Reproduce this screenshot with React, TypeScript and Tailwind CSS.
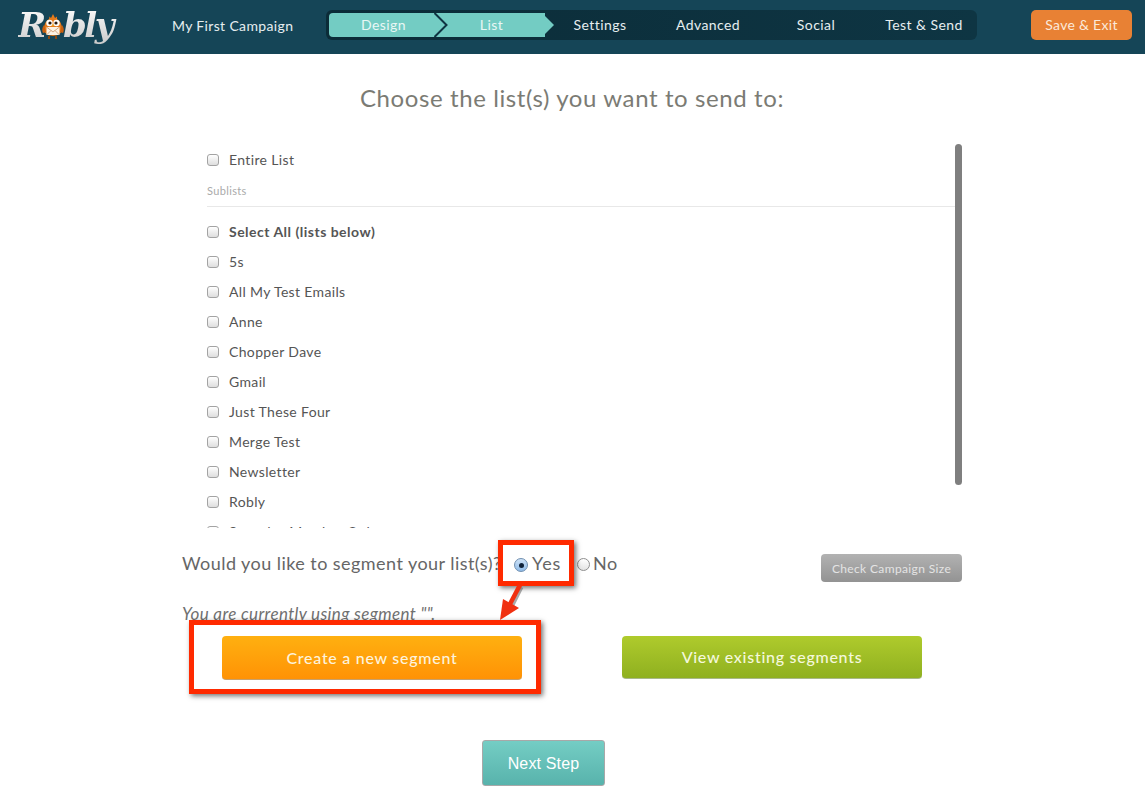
import React from 'react';

const LISTS = ['5s', 'All My Test Emails', 'Anne', 'Chopper Dave', 'Gmail', 'Just These Four', 'Merge Test', 'Newsletter', 'Robly', 'Saturday Member Only'];
const STEPS = ['Settings', 'Advanced', 'Social', 'Test & Send'];

const Check: React.FC = () => (
  <input
    type="checkbox"
    readOnly
    className="appearance-none w-3 h-3 shrink-0 translate-y-px rounded-[3px] border border-[#a3a3a3] bg-linear-to-b from-white to-[#dedede]"
  />
);

const Owl: React.FC = () => (
  <svg width="24" height="28" viewBox="0 0 24 28" className="shrink-0 -ml-[3px] -mr-[2px] mt-[3px]">
    <path d="M12 1 L14 5 L16 3.500 L16 6 Q21 9 21 16 Q21 22 12 23 Q3 22 3 16 Q3 9 8 6 L8.500 3.500 L10 5 Z" fill="#e57a1a" />
    <path d="M3 12 Q0 16 2 20 L5 19 Z M21 12 Q24 16 22 20 L19 19 Z" fill="#c9600f" />
    <circle cx="8.500" cy="10" r="3.200" fill="#fff" />
    <circle cx="15.500" cy="10" r="3.200" fill="#fff" />
    <circle cx="9" cy="10" r="1.600" fill="#2b1a0c" />
    <circle cx="15" cy="10" r="1.600" fill="#2b1a0c" />
    <path d="M11 11.500 L13 11.500 L12 13.500 Z" fill="#f4c430" />
    <rect x="5.500" y="14" width="13" height="8" rx="0.500" fill="#fbf3e6" />
    <path d="M5.500 14 L12 19 L18.500 14 M5.500 22 L10 17.500 M18.500 22 L14 17.500" fill="none" stroke="#c58a5a" strokeWidth="0.700" />
    <path d="M8 23 L8 26 M15 23 L15 26" stroke="#8a4a12" strokeWidth="2" />
  </svg>
);

const Logo: React.FC = () => (
  <div className="flex items-center w-[172px] pl-[18px] font-['DejaVu_Serif',serif] font-bold italic text-[34px] leading-[40px] tracking-[-0.07em]">
    <span className="bg-linear-to-b from-white to-[#c9c9c9] bg-clip-text text-transparent">R</span>
    <Owl />
    <span className="pr-2 bg-linear-to-b from-white to-[#c9c9c9] bg-clip-text text-transparent">bly</span>
  </div>
);

const Header: React.FC = () => (
  <header className="h-[54px] pb-1 bg-[#154557] flex items-center text-[14px] text-[#e6eef0]">
    <Logo />
    <div className="w-[154px] tracking-[0.025em]">My First Campaign</div>
    <nav className="w-[651px] h-[30px] rounded-md bg-linear-to-r from-[#0b2c38] to-[#0e3543] flex items-center pl-[3px]">
      <div className="relative w-[216px] h-6 bg-[#73ccc3] rounded-l-[4px] flex text-[#e8f7f5]">
        <span className="w-[109px] text-center leading-6 tracking-[0.03em]">Design</span>
        <span className="w-[107px] text-center leading-6 tracking-[0.03em]">List</span>
        <svg width="14" height="24" viewBox="0 0 14 24" className="absolute left-[105px] top-0">
          <path d="M0.500 0 L12.500 12 L0.500 24" fill="none" stroke="#0f3442" strokeWidth="2" />
        </svg>
        <svg width="12" height="24" viewBox="0 0 12 24" className="absolute left-[213px] top-0">
          <path d="M0 0 L12 12 L0 24 Z" fill="#73ccc3" />
        </svg>
      </div>
      <div className="flex pl-px">
        {STEPS.map((s) => (
          <span key={s} className="w-[108px] text-center leading-6 tracking-[0.03em]">{s}</span>
        ))}
      </div>
    </nav>
    <button className="ml-[54px] w-[101px] h-[30px] pb-px rounded-[5px] bg-[#e88134] text-[#fbe9da] tracking-[0.02em]">Save &amp; Exit</button>
  </header>
);

const ListBox: React.FC = () => (
  <div className="relative h-[384px] mt-[29px] overflow-hidden pl-[25px] text-[14px] text-[#555] tracking-[0.025em]">
    <label className="flex items-center gap-[10px] h-[30px]"><Check />Entire List</label>
    <div className="mt-[10px] pb-[9px] border-b border-[#e8e8e8] text-[11px] leading-[13px] text-[#aaa] mr-[7px]">Sublists</div>
    <label className="flex items-center gap-[10px] h-[30px] mt-[9px] font-bold tracking-[0.035em]"><Check />Select All (lists below)</label>
    {LISTS.map((l) => (
      <label key={l} className="flex items-center gap-[10px] h-[30px]"><Check />{l}</label>
    ))}
    <div className="absolute right-0 top-0 w-[7px] h-[341px] rounded-full bg-[#7f7f7f]" />
  </div>
);

const Radio: React.FC<{ on?: boolean }> = ({ on }) => (
  <span className={on
    ? 'mt-[4px] w-[14px] h-[14px] rounded-full border border-[#6f8fb0] bg-linear-to-b from-[#cfe3f7] to-[#8fbbe8] flex items-center justify-center'
    : 'mt-[4px] w-[13px] h-[13px] rounded-full border border-[#8f8f8f] bg-linear-to-b from-white to-[#e4e4e4]'}>
    {on && <span className="w-[5px] h-[5px] rounded-full bg-[#10233a]" />}
  </span>
);

const Segment: React.FC = () => (
  <div className="mt-[26px]">
    <div className="flex items-start h-[28px] text-[18px] leading-[19px] text-[#666] tracking-[0.025em]">
      <span className="w-[332px]">Would you like to segment your list(s)?</span>
      <Radio on />
      <span className="ml-1 w-[45px] tracking-[0.05em]">Yes</span>
      <Radio />
      <span className="ml-[3px]">No</span>
      <button className="ml-auto w-[141px] h-[28px] rounded-[4px] bg-linear-to-b from-[#b2b2b2] to-[#939393] text-[12px] text-[#e4e4e4] tracking-[0.03em]">Check Campaign Size</button>
    </div>
    <p className="mt-[21px] h-[21px] italic text-[17px] leading-[21px] text-[#707070] tracking-[0.02em]">You are currently using segment "".</p>
    <div className="flex gap-[100px] pl-[40px] mt-[12px]">
      <button className="w-[300px] h-[44px] rounded-[4px] bg-linear-to-b from-[#ffb010] to-[#ff9205] border-b border-[#c9a06a] text-[16px] font-medium text-[#fdf3dc] tracking-[0.045em]">Create a new segment</button>
      <button className="w-[300px] h-[43px] rounded-[4px] bg-linear-to-b from-[#afcb2c] to-[#8fb020] border-b border-[#a8b88a] text-[16px] font-medium text-[#f4f8dc] tracking-[0.045em]">View existing segments</button>
    </div>
  </div>
);

const Annotations: React.FC = () => (
  <>
    <div className="absolute left-[498px] top-[540px] w-[76px] h-[46px] border-[5px] border-[#ff2a00] shadow-[2px_2px_5px_rgba(0,0,0,0.55)]" />
    <div className="absolute left-[189px] top-[620px] w-[352px] h-[74px] border-[5px] border-[#ff2a00] shadow-[2px_2px_5px_rgba(0,0,0,0.55)]" />
    <svg width="40" height="40" viewBox="0 0 40 40" className="absolute left-[495px] top-[584px]">
      <path d="M25 2 L16 20" stroke="#555" strokeWidth="5" opacity="0.5" transform="translate(1 1)" />
      <path d="M25 1 L15 20" stroke="#f03010" strokeWidth="4.500" />
      <path d="M5 36 L8 15 L24 24 Z" fill="#f03010" />
    </svg>
  </>
);

export default function App() {
  return (
    <div className="relative h-[800px] overflow-hidden bg-white font-['Lato',sans-serif]">
      <Header />
      <main className="w-[780px] ml-[182px]">
        <h1 className="mt-[27px] h-[34px] text-center text-[24px] leading-[34px] text-[#7b7b74] tracking-[0.025em]">Choose the list(s) you want to send to:</h1>
        <ListBox />
        <Segment />
        <div className="mt-[60px] pl-[300px]">
          <button className="w-[123px] h-[46px] pt-px rounded-[3px] border border-[#a8a8a8] bg-linear-to-b from-[#74cdc4] to-[#58b3ac] font-['Liberation_Sans',sans-serif] text-[16px] font-medium text-white tracking-[0.01em]">Next Step</button>
        </div>
      </main>
      <Annotations />
    </div>
  );
}
